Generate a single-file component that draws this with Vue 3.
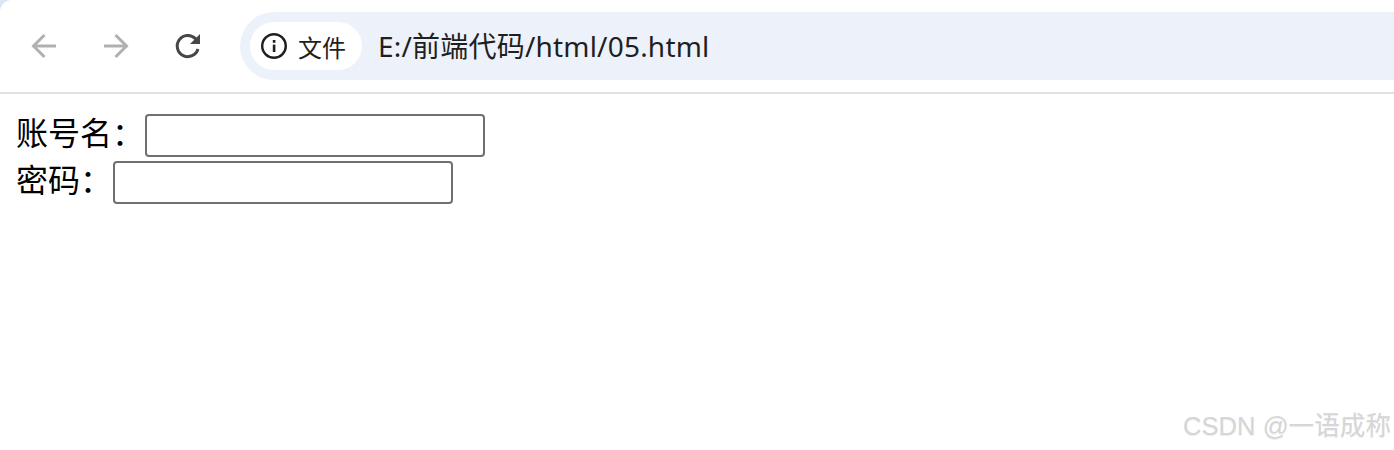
<script setup>
import { ref } from 'vue'

const account = ref('')
const password = ref('')
</script>

<template>
  <div class="window">
    <header class="toolbar">
      <span class="corner"></span>
      <button class="nav-btn first" aria-label="back">
        <svg width="32" height="32" viewBox="0 0 32 32" fill="none" stroke="#b0b0b0" stroke-width="3">
          <path d="M28 16H6" />
          <path d="M16.5 5 5.5 16l11 11" />
        </svg>
      </button>
      <button class="nav-btn" aria-label="forward">
        <svg width="32" height="32" viewBox="0 0 32 32" fill="none" stroke="#b0b0b0" stroke-width="3">
          <path d="M4 16h22" />
          <path d="M15.5 5l11 11-11 11" />
        </svg>
      </button>
      <button class="nav-btn" aria-label="reload">
        <svg width="32" height="32" viewBox="0 0 32 32" fill="none">
          <path d="M26 19a10.6 10.6 0 1 1-2.6-10.4L26 11.5" stroke="#474747" stroke-width="3" />
          <path d="M28 4v10H18z" fill="#474747" />
        </svg>
      </button>
      <div class="omnibox">
        <div class="chip">
          <svg width="28" height="28" viewBox="0 0 28 28" fill="none">
            <circle cx="14" cy="14" r="11.8" stroke="#1f1f1f" stroke-width="2.4" />
            <rect x="12.8" y="12.6" width="2.6" height="7.4" fill="#1f1f1f" />
            <rect x="12.8" y="8" width="2.6" height="2.8" fill="#1f1f1f" />
          </svg>
          <span>文件</span>
        </div>
        <span class="url">E:/前端代码/html/05.html</span>
      </div>
    </header>

    <main class="page">
      <div class="row">
        <label for="account">账号名：</label>
        <input id="account" v-model="account" type="text" />
      </div>
      <div class="row">
        <label for="password">密码：</label>
        <input id="password" v-model="password" type="password" />
      </div>
    </main>

    <div class="watermark">CSDN @一语成称</div>
  </div>
</template>

<style>
html,
body {
  margin: 0;
  background: #fff;
}
</style>

<style scoped>
.window {
  position: relative;
  height: 450px;
  overflow: hidden;
  background: #fff;
}

.toolbar {
  position: relative;
  display: flex;
  align-items: center;
  height: 92px;
  border-bottom: 2px solid #e1e1e1;
  box-sizing: content-box;
}

.corner {
  position: absolute;
  left: 0;
  top: 0;
  width: 12px;
  height: 12px;
  background: radial-gradient(circle at 100% 100%, #fff 11.5px, #dde6f7 12.5px);
}

.nav-btn {
  display: flex;
  align-items: center;
  justify-content: center;
  width: 32px;
  height: 32px;
  margin-left: 40px;
  padding: 0;
  border: 0;
  background: none;
}

.nav-btn.first {
  margin-left: 28px;
}

.omnibox {
  display: flex;
  align-items: center;
  flex: 1;
  height: 68px;
  margin-left: 36px;
  padding-left: 10px;
  border-radius: 34px 0 0 34px;
  background: #edf2fa;
}

.chip {
  display: flex;
  align-items: center;
  gap: 10px;
  width: 112px;
  height: 48px;
  padding-left: 10px;
  box-sizing: border-box;
  border-radius: 24px;
  background: #fff;
  color: #1f1f1f;
  font: 24px "Noto Sans CJK SC", sans-serif;
}

.url {
  margin: 0 0 3px 16px;
  color: #1f1f1f;
  font: 28px "Noto Sans", "Noto Sans CJK SC", sans-serif;
  letter-spacing: 0.2px;
}

.page {
  display: flex;
  flex-direction: column;
  gap: 4px;
  padding: 20px 0 0 16px;
  font: 32px "Noto Sans CJK SC", sans-serif;
  color: #000;
}

.row {
  display: flex;
  align-items: flex-start;
  height: 43px;
}

label {
  line-height: 35px;
  margin-right: 1px;
}

input {
  width: 340px;
  height: 43px;
  padding: 0;
  box-sizing: border-box;
  border: 2px solid #707070;
  border-radius: 4px;
  background: #fff;
  outline: none;
}

.watermark {
  position: absolute;
  right: 3px;
  bottom: 8px;
  color: #d6d6d6;
  font: 25.6px "Liberation Sans", "Noto Sans CJK SC", sans-serif;
  text-shadow: 0 1px 1px rgba(0, 0, 0, 0.08);
  white-space: nowrap;
}
</style>
